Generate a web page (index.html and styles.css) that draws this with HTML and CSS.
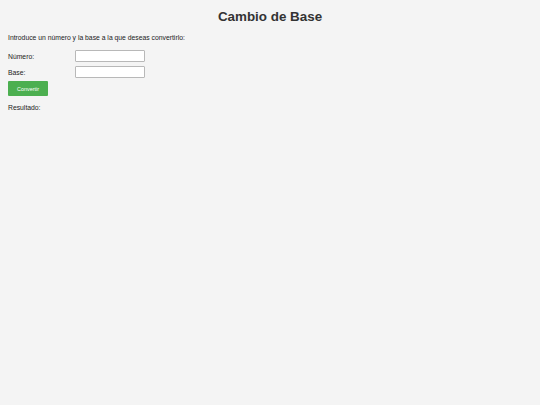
FILE: index.html
```html
<!DOCTYPE html>
<html lang="es">
<head>
<meta charset="utf-8">
<title>Cambio de Base</title>
<link rel="stylesheet" href="styles.css">
</head>
<body>
<h1 class="title">Cambio de Base</h1>
<p class="intro">Introduce un número y la base a la que deseas convertirlo:</p>
<form class="form">
  <div class="row"><label class="label" for="num">Número:</label><input class="field" id="num" type="text"></div>
  <div class="row last"><label class="label" for="base">Base:</label><input class="field" id="base" type="text"></div>
  <button class="btn" type="button">Convertir</button>
</form>
<p class="result">Resultado:</p>
</body>
</html>
```
FILE: styles.css
```css
html, body { margin: 0; padding: 0; background: #f4f4f4; }
body {
  padding: 8px;
  font-family: "Liberation Sans", Arial, sans-serif;
  color: #222;
  font-size: 6.8px;
}
.title {
  margin: 0;
  padding-top: 1px;
  text-align: center;
  font-size: 13.4px;
  font-weight: bold;
  color: #333;
  line-height: 16px;
}
.intro { margin: 9px 0 0; line-height: 8px; }
.form { margin-top: 8px; display: flex; flex-direction: column; align-items: flex-start; }
.row { display: flex; align-items: center; margin-bottom: 4px; }
.row.last { margin-bottom: 3px; }
.label { width: 67px; }
.field {
  box-sizing: border-box;
  width: 70px; height: 12px;
  margin: 0; padding: 0 2px;
  border: 1px solid #b8b8b8;
  border-radius: 1px;
  background: #fff;
  font-size: 6.8px;
}
.btn {
  margin: 0;
  width: 40px; height: 15px;
  border: 0; border-radius: 1px;
  background: #4caf50;
  color: #fff;
  font-family: "Liberation Sans", Arial, sans-serif;
  font-size: 5.4px;
  padding: 0;
}
.result { margin: 8px 0 0; line-height: 8px; }
```
